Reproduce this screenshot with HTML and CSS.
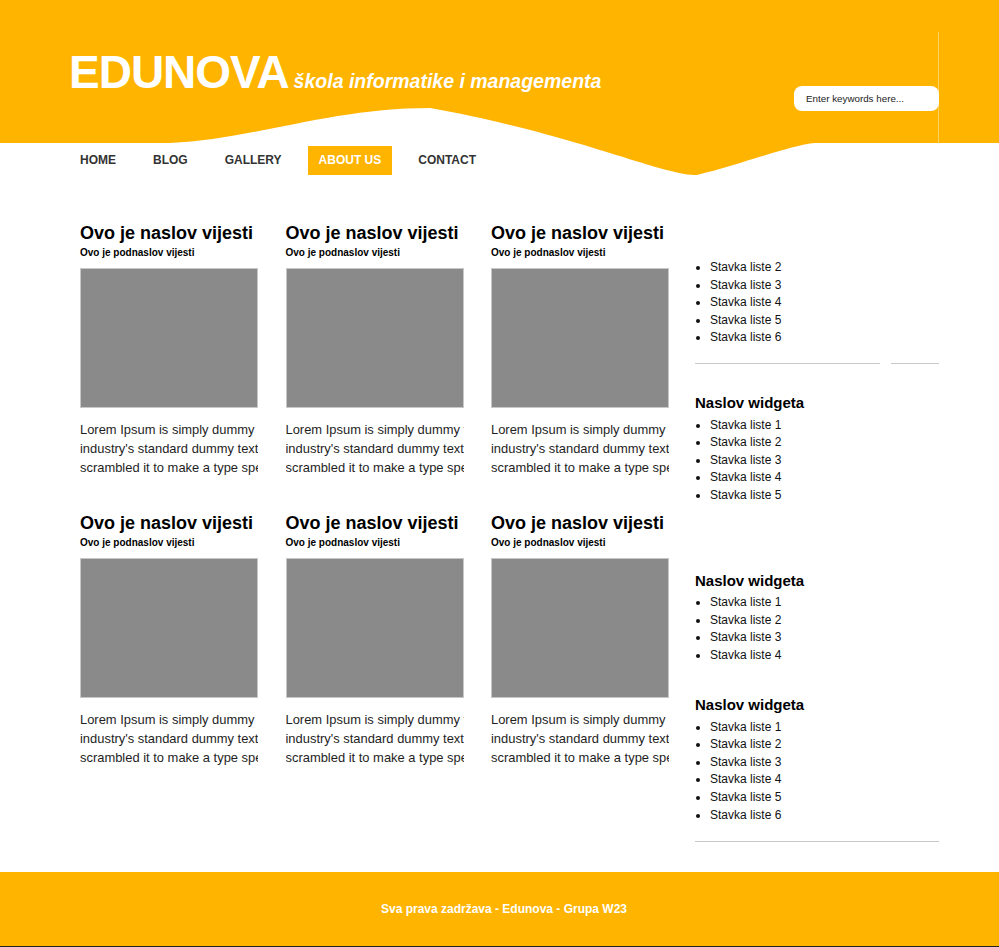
FILE: index.html
```html
<!DOCTYPE html>
<html lang="hr">
<head>
<meta charset="utf-8">
<title>Edunova</title>
<link rel="stylesheet" href="styles.css">
</head>
<body>
<header class="site-header">
  <svg class="wave" viewBox="0 0 999 180" width="999" height="180" aria-hidden="true">
    <path d="M0 0 H999 V143 H815 C790 145 740 165 697 175 C660 175 580 135 430 108 C330 108 250 140 170 143 H0 Z" fill="#ffb400"/>
  </svg>
  <div class="header-inner">
    <div class="brand">
      <span class="logo">EDUNOVA</span>
      <span class="tagline">škola informatike i managementa</span>
    </div>
    <div class="search">
      <input class="search-input" type="text" placeholder="Enter keywords here...">
    </div>
  </div>
</header>

<nav class="main-nav">
  <a class="nav-link" href="#">Home</a>
  <a class="nav-link" href="#">Blog</a>
  <a class="nav-link" href="#">Gallery</a>
  <a class="nav-link nav-link--active" href="#">About us</a>
  <a class="nav-link" href="#">Contact</a>
</nav>

<div class="page">
  <main class="articles">
    <article class="article">
      <h2 class="article-title">Ovo je naslov vijesti</h2>
      <h3 class="article-sub">Ovo je podnaslov vijesti</h3>
      <div class="thumb"></div>
      <p class="article-text">Lorem Ipsum is simply dummy text of the printing and typesetting industry. Lorem Ipsum has been the<br>industry's standard dummy text ever since the 1500s, when an unknown printer took a galley of type and<br>scrambled it to make a type specimen book.</p>
    </article>
    <article class="article">
      <h2 class="article-title">Ovo je naslov vijesti</h2>
      <h3 class="article-sub">Ovo je podnaslov vijesti</h3>
      <div class="thumb"></div>
      <p class="article-text">Lorem Ipsum is simply dummy text of the printing and typesetting industry. Lorem Ipsum has been the<br>industry's standard dummy text ever since the 1500s, when an unknown printer took a galley of type and<br>scrambled it to make a type specimen book.</p>
    </article>
    <article class="article">
      <h2 class="article-title">Ovo je naslov vijesti</h2>
      <h3 class="article-sub">Ovo je podnaslov vijesti</h3>
      <div class="thumb"></div>
      <p class="article-text">Lorem Ipsum is simply dummy text of the printing and typesetting industry. Lorem Ipsum has been the<br>industry's standard dummy text ever since the 1500s, when an unknown printer took a galley of type and<br>scrambled it to make a type specimen book.</p>
    </article>
    <article class="article">
      <h2 class="article-title">Ovo je naslov vijesti</h2>
      <h3 class="article-sub">Ovo je podnaslov vijesti</h3>
      <div class="thumb"></div>
      <p class="article-text">Lorem Ipsum is simply dummy text of the printing and typesetting industry. Lorem Ipsum has been the<br>industry's standard dummy text ever since the 1500s, when an unknown printer took a galley of type and<br>scrambled it to make a type specimen book.</p>
    </article>
    <article class="article">
      <h2 class="article-title">Ovo je naslov vijesti</h2>
      <h3 class="article-sub">Ovo je podnaslov vijesti</h3>
      <div class="thumb"></div>
      <p class="article-text">Lorem Ipsum is simply dummy text of the printing and typesetting industry. Lorem Ipsum has been the<br>industry's standard dummy text ever since the 1500s, when an unknown printer took a galley of type and<br>scrambled it to make a type specimen book.</p>
    </article>
    <article class="article">
      <h2 class="article-title">Ovo je naslov vijesti</h2>
      <h3 class="article-sub">Ovo je podnaslov vijesti</h3>
      <div class="thumb"></div>
      <p class="article-text">Lorem Ipsum is simply dummy text of the printing and typesetting industry. Lorem Ipsum has been the<br>industry's standard dummy text ever since the 1500s, when an unknown printer took a galley of type and<br>scrambled it to make a type specimen book.</p>
    </article>
  </main>

  <aside class="sidebar">
    <section class="widget widget--first">
      <ul class="widget-list">
        <li>Stavka liste 2</li>
        <li>Stavka liste 3</li>
        <li>Stavka liste 4</li>
        <li>Stavka liste 5</li>
        <li>Stavka liste 6</li>
      </ul>
      <div class="rule rule--split">
        <span class="rule-seg rule-seg--long"></span>
        <span class="rule-seg rule-seg--short"></span>
      </div>
    </section>

    <section class="widget widget--second">
      <h4 class="widget-title">Naslov widgeta</h4>
      <ul class="widget-list">
        <li>Stavka liste 1</li>
        <li>Stavka liste 2</li>
        <li>Stavka liste 3</li>
        <li>Stavka liste 4</li>
        <li>Stavka liste 5</li>
      </ul>
    </section>

    <section class="widget widget--third">
      <h4 class="widget-title">Naslov widgeta</h4>
      <ul class="widget-list">
        <li>Stavka liste 1</li>
        <li>Stavka liste 2</li>
        <li>Stavka liste 3</li>
        <li>Stavka liste 4</li>
      </ul>
    </section>

    <section class="widget widget--fourth">
      <h4 class="widget-title">Naslov widgeta</h4>
      <ul class="widget-list">
        <li>Stavka liste 1</li>
        <li>Stavka liste 2</li>
        <li>Stavka liste 3</li>
        <li>Stavka liste 4</li>
        <li>Stavka liste 5</li>
        <li>Stavka liste 6</li>
      </ul>
      <div class="rule rule--full"></div>
    </section>
  </aside>
</div>

<footer class="site-footer">Sva prava zadržava - Edunova - Grupa W23</footer>
</body>
</html>
```
FILE: styles.css
```css
html, body {
  margin: 0;
  padding: 0;
  background: #fff;
}

body {
  font-family: "Liberation Sans", Arial, sans-serif;
  color: #000;
  width: 999px;
}

/* Header */
.site-header {
  position: relative;
  height: 143px;
}

.wave {
  position: absolute;
  top: 0;
  left: 0;
  z-index: 0;
  display: block;
}

.header-inner {
  position: relative;
  z-index: 1;
  display: flex;
  justify-content: space-between;
  align-items: flex-start;
  box-sizing: border-box;
  width: 939px;
  height: 143px;
  padding-left: 69px;
}

.brand {
  display: flex;
  align-items: baseline;
  padding-top: 49px;
  color: #fff;
}

.logo {
  font-size: 46px;
  line-height: 46px;
  font-weight: bold;
  letter-spacing: -1px;
}

.tagline {
  margin-left: 5px;
  font-size: 19.5px;
  font-weight: bold;
  font-style: italic;
}

.search {
  box-sizing: border-box;
  margin-top: 32px;
  height: 111px;
  padding-top: 54px;
  border-right: 1px solid rgba(255, 255, 255, 0.4);
}

.search-input {
  display: block;
  box-sizing: border-box;
  width: 145px;
  height: 25px;
  margin-right: -1px;
  padding: 0 12px;
  border: none;
  border-radius: 8px;
  background: #fff;
  font-family: "Liberation Sans", Arial, sans-serif;
  font-size: 9.8px;
  color: #222;
  outline: none;
}

.search-input::placeholder {
  color: #222;
  opacity: 1;
}

/* Navigation */
.main-nav {
  position: relative;
  z-index: 1;
  display: flex;
  gap: 15px;
  margin: 3px 0 0 69px;
  height: 29px;
}

.nav-link {
  display: block;
  padding: 0 11px;
  line-height: 29px;
  font-size: 12px;
  font-weight: bold;
  text-transform: uppercase;
  text-decoration: none;
  color: #333;
}

.nav-link--active {
  background: #ffb400;
  color: #fff;
}

/* Page layout */
.page {
  display: flex;
  align-items: flex-start;
  margin: 47px 0 0 80px;
}

.articles {
  display: grid;
  grid-template-columns: repeat(3, 178px);
  column-gap: 27.5px;
  row-gap: 35px;
  width: 589px;
}

.article {
  width: 178px;
}

.article-title {
  margin: 0;
  font-size: 18px;
  line-height: 22px;
  font-weight: bold;
  white-space: nowrap;
  color: #000;
}

.article-sub {
  margin: 3px 0 0;
  font-size: 10px;
  line-height: 12px;
  font-weight: bold;
  color: #000;
}

.thumb {
  box-sizing: border-box;
  margin-top: 9px;
  height: 140px;
  border: 1px solid #c8c8c8;
  background: #8a8a8a;
}

.article-text {
  margin: 12px 0 0;
  font-size: 12.93px;
  line-height: 19px;
  white-space: nowrap;
  overflow: hidden;
  color: #1e1e1e;
}

/* Sidebar */
.sidebar {
  width: 244px;
  margin-left: 26px;
  padding-top: 37px;
}

.widget-title {
  margin: 0;
  font-size: 15px;
  line-height: 18px;
  font-weight: bold;
  color: #000;
}

.widget-list {
  margin: 4.6px 0 0;
  padding-left: 15px;
  font-size: 12px;
  line-height: 17.6px;
  color: #111;
}

.widget--first .widget-list {
  margin-top: 0;
}

.widget--second {
  margin-top: 30px;
}

.widget--third {
  margin-top: 67px;
}

.widget--fourth {
  margin-top: 31.6px;
}

.rule--split {
  display: flex;
  gap: 11px;
  margin-top: 16px;
}

.rule-seg {
  display: block;
  height: 1px;
  background: #c8c8c8;
}

.rule-seg--long {
  width: 185px;
}

.rule-seg--short {
  width: 48px;
}

.rule--full {
  margin-top: 16.5px;
  height: 1px;
  background: #c8c8c8;
}

/* Footer */
.site-footer {
  margin-top: 30px;
  box-sizing: border-box;
  height: 75px;
  padding-left: 9px;
  line-height: 74px;
  background: #ffb400;
  border-bottom: 1px solid #222;
  text-align: center;
  font-size: 12px;
  font-weight: bold;
  color: #fff;
}
```
